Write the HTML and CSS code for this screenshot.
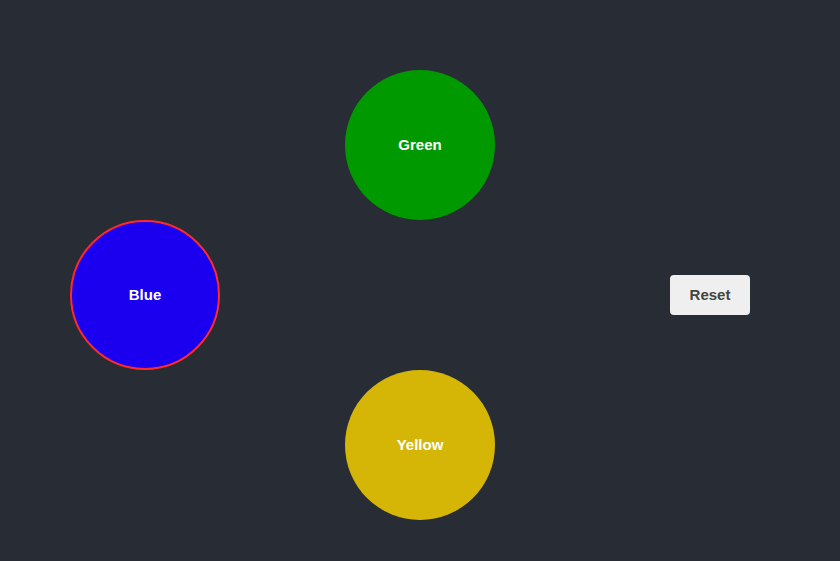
FILE: index.html
```html
<!DOCTYPE html>
<html>
<head>
<meta charset="utf-8">
<link rel="stylesheet" href="styles.css">
</head>
<body>
<div class="board">
  <div class="circle green">Green</div>
  <div class="circle blue selected">Blue</div>
  <div class="reset-cell"><button class="reset">Reset</button></div>
  <div class="circle yellow">Yellow</div>
</div>
</body>
</html>
```
FILE: styles.css
```css
html, body {
  margin: 0;
  padding: 0;
  background: #282c34;
  width: 840px;
  height: 561px;
  overflow: hidden;
  font-family: "Liberation Sans", Arial, sans-serif;
}
.board {
  display: grid;
  grid-template-columns: 150px 125px 150px 175px 80px;
  grid-template-rows: 150px 150px 150px;
  padding: 70px 0 0 70px;
}
.circle {
  width: 150px;
  height: 150px;
  border-radius: 50%;
  box-sizing: border-box;
  display: flex;
  align-items: center;
  justify-content: center;
  padding-bottom: 2px;
  color: #fff;
  font-weight: bold;
  font-size: 15px;
}
.green { grid-column: 3; grid-row: 1; background: #009900; }
.blue { grid-column: 1; grid-row: 2; background: #1a00ee; }
.blue.selected { border: 2px solid #ff2a2a; }
.yellow { grid-column: 3; grid-row: 3; background: #d5b606; }
.reset-cell {
  grid-column: 5;
  grid-row: 2;
  display: flex;
  align-items: center;
}
.reset {
  width: 80px;
  height: 40px;
  border: none;
  border-radius: 4px;
  background: #efefef;
  color: #444;
  font-family: "Liberation Sans", Arial, sans-serif;
  font-weight: bold;
  font-size: 15px;
  padding: 0 0 2px 0;
}
```
